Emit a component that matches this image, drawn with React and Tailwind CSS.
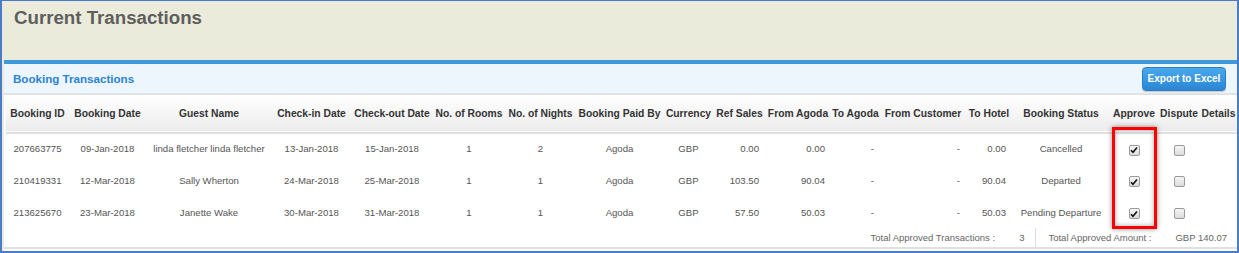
import React from "react";

const cols = [
  { label: "Booking ID", w: 63, align: "center" },
  { label: "Booking Date", w: 77, align: "center" },
  { label: "Guest Name", w: 126, align: "center" },
  { label: "Check-in Date", w: 79, align: "center" },
  { label: "Check-out Date", w: 82, align: "center" },
  { label: "No. of Rooms", w: 72, align: "center" },
  { label: "No. of Nights", w: 71, align: "center" },
  { label: "Booking Paid By", w: 87, align: "center" },
  { label: "Currency", w: 51, align: "center" },
  { label: "Ref Sales", w: 51, align: "right" },
  { label: "From Agoda", w: 66, align: "right" },
  { label: "To Agoda", w: 49, align: "right" },
  { label: "From Customer", w: 86, align: "right" },
  { label: "To Hotel", w: 46, align: "right" },
  { label: "Booking Status", w: 98, align: "center" },
  { label: "Approve", w: 48, align: "center" },
  { label: "Dispute", w: 42, align: "center" },
  { label: "Details", w: 37, align: "center" },
];

const rows = [
  ["207663775", "09-Jan-2018", "linda fletcher linda fletcher", "13-Jan-2018", "15-Jan-2018", "1", "2", "Agoda", "GBP", "0.00", "0.00", "-", "-", "0.00", "Cancelled"],
  ["210419331", "12-Mar-2018", "Sally Wherton", "24-Mar-2018", "25-Mar-2018", "1", "1", "Agoda", "GBP", "103.50", "90.04", "-", "-", "90.04", "Departed"],
  ["213625670", "23-Mar-2018", "Janette Wake", "30-Mar-2018", "31-Mar-2018", "1", "1", "Agoda", "GBP", "57.50", "50.03", "-", "-", "50.03", "Pending Departure"],
];

// old-style grey checkbox
function Check({ checked }) {
  return (
    <span className="inline-flex h-[11px] w-[11px] items-center justify-center rounded-[2px] border border-[#9a9a9a] bg-gradient-to-b from-[#f6f6f6] to-[#dcdcdc] align-middle">
      {checked && (
        <svg width="8" height="8" viewBox="0 0 8 8">
          <path d="M1 4.2 L3 6.3 L7 1.5" fill="none" stroke="#111" strokeWidth="1.6" />
        </svg>
      )}
    </span>
  );
}

export default function App() {
  return (
    <div className="relative h-[253px] w-[1239px] overflow-hidden border-t border-r-2 border-b-2 border-l-2 border-[#4a7cc9] bg-[#ebebdc] font-['Liberation_Sans',Arial,sans-serif]">
      {/* page title */}
      <div className="h-[59px] pl-[12px] pt-[6px]">
        <h1 className="text-[18.7px] font-bold leading-[22px] text-[#5e5e5e]">Current Transactions</h1>
      </div>

      {/* panel */}
      <div className="ml-[2px] h-[191px] border-t-4 border-[#3d98dc] bg-white">
        <div className="flex h-[31px] items-center justify-between border-b-2 border-[#e2e2e2] bg-[#eef6fd] pl-[9px] pr-[11px]">
          <span className="text-[11.6px] font-bold text-[#2a83d2]">Booking Transactions</span>
          <button className="h-[24px] w-[84px] rounded-[4px] border border-[#2b7fc8] bg-gradient-to-b from-[#48a8ec] to-[#2a86d4] text-[10px] font-bold text-white shadow-[0_1px_1px_rgba(0,0,0,0.2)]">
            Export to Excel
          </button>
        </div>

        <table className="ml-[2px] table-fixed border-collapse">
          <colgroup>
            {cols.map((c) => (
              <col key={c.label} style={{ width: c.w }} />
            ))}
          </colgroup>
          <thead>
            <tr className="h-[38px] border-b-2 border-[#e0e0e0] bg-gradient-to-b from-white to-[#ececec]">
              {cols.map((c) => (
                <th key={c.label} className="whitespace-nowrap p-0 text-center text-[10.3px] font-bold text-[#333]">
                  {c.label}
                </th>
              ))}
            </tr>
          </thead>
          <tbody>
            {rows.map((r) => (
              <tr key={r[0]} className="h-[32px]">
                {r.map((v, i) => (
                  <td
                    key={i}
                    className={
                      "whitespace-nowrap p-0 text-[9.6px] text-[#555] " +
                      (cols[i].align === "right" ? "pr-[6px] text-right" : "text-center")
                    }
                  >
                    {v}
                  </td>
                ))}
                <td className="p-0 text-center">
                  <Check checked />
                </td>
                <td className="p-0 text-center">
                  <Check />
                </td>
                <td />
              </tr>
            ))}
          </tbody>
        </table>

        {/* totals */}
        <div className="flex h-[20px] items-center justify-end border-b-2 border-[#e0e0e0] pr-[10px] text-[9.5px] text-[#666]">
          <span className="ml-[2px]">Total Approved Transactions :</span>
          <span className="ml-[24px]">3</span>
          <span className="ml-[11px] h-[20px] w-px bg-[#dedede]" />
          <span className="ml-[12px]">Total Approved Amount :</span>
          <span className="ml-[24px]">GBP 140.07</span>
        </div>
      </div>

      {/* red highlight annotation */}
      <div className="absolute left-[1110px] top-[126px] h-[102px] w-[45px] border-[3px] border-[#ff0000] shadow-[0_0_5px_rgba(0,0,0,0.45),inset_0_0_5px_rgba(0,0,0,0.35)]" />
    </div>
  );
}
